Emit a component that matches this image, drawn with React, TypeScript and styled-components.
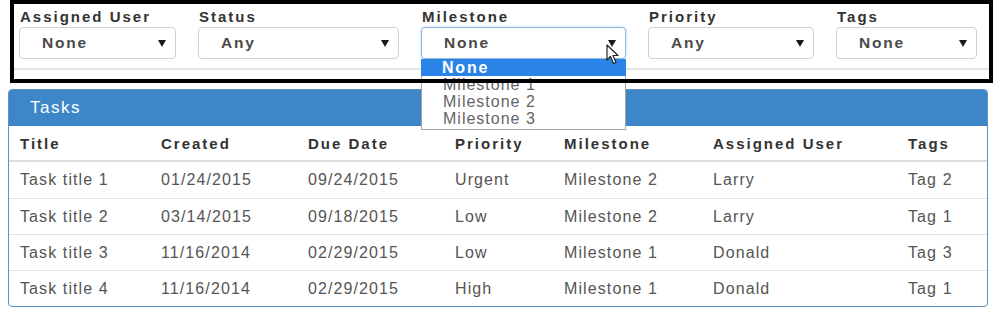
import styled, { createGlobalStyle } from 'styled-components';

const GlobalStyle = createGlobalStyle`
  html, body {
    margin: 0;
    background: #fff;
  }
  body {
    font-family: 'Liberation Sans', Arial, sans-serif;
    color: #555;
  }
`;

type Filter = { label: string; value: string; focused?: boolean };

const filters: Filter[] = [
  { label: 'Assigned User', value: 'None' },
  { label: 'Status', value: 'Any' },
  { label: 'Milestone', value: 'None', focused: true },
  { label: 'Priority', value: 'Any' },
  { label: 'Tags', value: 'None' },
];

const milestoneOptions = ['None', 'Milestone 1', 'Milestone 2', 'Milestone 3'];

const columns = [
  { title: 'Title', width: 141 },
  { title: 'Created', width: 147 },
  { title: 'Due Date', width: 147 },
  { title: 'Priority', width: 109 },
  { title: 'Milestone', width: 149 },
  { title: 'Assigned User', width: 195 },
  { title: 'Tags', width: 90 },
];

const tasks = [
  ['Task title 1', '01/24/2015', '09/24/2015', 'Urgent', 'Milestone 2', 'Larry', 'Tag 2'],
  ['Task title 2', '03/14/2015', '09/18/2015', 'Low', 'Milestone 2', 'Larry', 'Tag 1'],
  ['Task title 3', '11/16/2014', '02/29/2015', 'Low', 'Milestone 1', 'Donald', 'Tag 3'],
  ['Task title 4', '11/16/2014', '02/29/2015', 'High', 'Milestone 1', 'Donald', 'Tag 1'],
];

const Page = styled.div`
  width: 999px;
  height: 316px;
  overflow: hidden;
`;

// the thick black frame is a highlight drawn over the filters
const FilterSection = styled.section`
  position: relative;
  width: 983px;
  height: 83px;
  margin-left: 10px;
  padding-top: 8px;
  box-sizing: border-box;

  &::after {
    content: '';
    position: absolute;
    inset: 0;
    border: 4px solid #000;
    z-index: 5;
    pointer-events: none;
  }
`;

const FilterRow = styled.div`
  display: grid;
  grid-template-columns: 157px 201px 205px 166px 141px;
  column-gap: 22px;
  padding: 0 0 9px 9px;
  border-bottom: 2px solid #e4e4e4;
`;

const Field = styled.div`
  position: relative;
`;

const Label = styled.label`
  display: block;
  padding-left: 1px;
  margin-bottom: 2px;
  font-weight: bold;
  font-size: 15px;
  line-height: 17px;
  letter-spacing: 2px;
  color: #333;
`;

const Select = styled.div<{ $focused?: boolean }>`
  position: relative;
  display: flex;
  align-items: center;
  justify-content: space-between;
  height: 32px;
  box-sizing: border-box;
  padding: 0 9px 0 22px;
  border: 1px solid ${(p) => (p.$focused ? '#8fb8dc' : '#d2d2d2')};
  border-radius: 4px;
  background: #fff;
  box-shadow: ${(p) => (p.$focused ? '0 0 3px rgba(102, 160, 220, 0.45)' : 'none')};
  font-weight: bold;
  font-size: 15.5px;
  letter-spacing: 1.8px;
  color: #4a4a4a;
`;

const Caret = styled.svg`
  width: 8px;
  height: 7px;
  fill: #1a1a1a;
`;

const Cursor = styled.svg`
  position: absolute;
  left: 184px;
  top: 16px;
  width: 14px;
  height: 21px;
  z-index: 6;
`;

const Dropdown = styled.ul`
  position: absolute;
  top: 100%;
  left: 0;
  right: 0;
  margin: 0;
  padding: 0 0 2px;
  list-style: none;
  background: #fff;
  border: 1px solid #a3a3a3;
  border-top: none;
  z-index: 4;
`;

const Option = styled.li<{ $active?: boolean }>`
  height: 17px;
  padding-left: 21px;
  font-size: 16px;
  line-height: 17px;
  letter-spacing: ${(p) => (p.$active ? '1.8px' : '1px')};
  font-weight: ${(p) => (p.$active ? 'bold' : 'normal')};
  background: ${(p) => (p.$active ? '#2a84e8' : 'transparent')};
  color: ${(p) => (p.$active ? '#fff' : '#666')};
  margin-left: ${(p) => (p.$active ? '-1px' : '0')};
  margin-right: ${(p) => (p.$active ? '-1px' : '0')};
`;

const Panel = styled.div`
  width: 980px;
  margin: 6px 0 0 8px;
  box-sizing: border-box;
  border: 1px solid #5b93c6;
  border-radius: 4px;
  overflow: hidden;
`;

const PanelHeading = styled.div`
  height: 36px;
  padding-left: 21px;
  background: #3d87c8;
  color: #fff;
  font-size: 17px;
  line-height: 35px;
  letter-spacing: 1.5px;
`;

const Table = styled.table`
  width: 100%;
  table-layout: fixed;
  border-collapse: separate;
  border-spacing: 0;
`;

const Col = styled.col<{ $w: number }>`
  width: ${(p) => p.$w}px;
`;

const Th = styled.th`
  padding: 8px 11px 6px;
  border-bottom: 2px solid #dedede;
  text-align: left;
  font-weight: bold;
  font-size: 15px;
  line-height: 20px;
  letter-spacing: 2px;
  color: #333;
  white-space: nowrap;
`;

const Td = styled.td`
  padding: 8px 11px 7px;
  border-top: 1px solid #e2e2e2;
  font-size: 16px;
  line-height: 20px;
  letter-spacing: 1.1px;
  color: #555;
  white-space: nowrap;

  tr:first-child > & {
    border-top: none;
    padding-bottom: 8px;
  }
`;

export default function App() {
  return (
    <Page>
      <GlobalStyle />
      <FilterSection>
        <FilterRow>
          {filters.map((f) => (
            <Field key={f.label}>
              <Label>{f.label}</Label>
              <Select $focused={f.focused}>
                <span>{f.value}</span>
                <Caret viewBox='0 0 8 7'>
                  <polygon points='0,0 8,0 4,7' />
                </Caret>
                {f.focused && (
                  <Cursor viewBox='0 0 14 21'>
                    <path
                      d='M1 1 L1 16 L4.5 12.5 L7.5 19.5 L10 18.5 L7 11.5 L12 11.5 Z'
                      fill='#fff'
                      stroke='#222'
                      strokeWidth='1.2'
                      strokeLinejoin='round'
                    />
                  </Cursor>
                )}
              </Select>
              {f.focused && (
                <Dropdown>
                  {milestoneOptions.map((o, i) => (
                    <Option key={o} $active={i === 0}>
                      {o}
                    </Option>
                  ))}
                </Dropdown>
              )}
            </Field>
          ))}
        </FilterRow>
      </FilterSection>

      <Panel>
        <PanelHeading>Tasks</PanelHeading>
        <Table>
          <colgroup>
            {columns.map((c) => (
              <Col key={c.title} $w={c.width} />
            ))}
          </colgroup>
          <thead>
            <tr>
              {columns.map((c) => (
                <Th key={c.title}>{c.title}</Th>
              ))}
            </tr>
          </thead>
          <tbody>
            {tasks.map((row) => (
              <tr key={row[0]}>
                {row.map((cell, i) => (
                  <Td key={i}>{cell}</Td>
                ))}
              </tr>
            ))}
          </tbody>
        </Table>
      </Panel>
    </Page>
  );
}
